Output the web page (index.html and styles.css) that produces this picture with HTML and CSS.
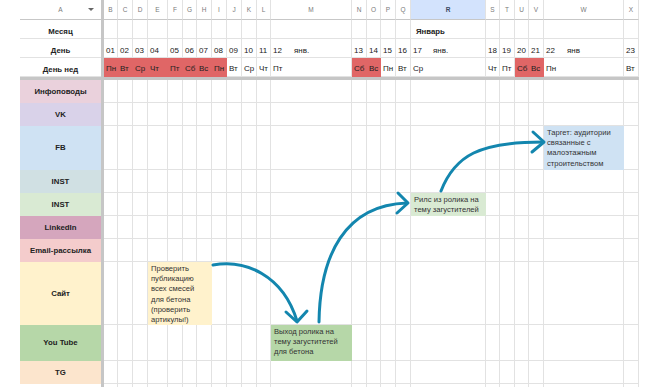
FILE: index.html
```html
<!DOCTYPE html>
<html lang="ru">
<head>
<meta charset="utf-8">
<title>Контент-план</title>
<link rel="stylesheet" href="styles.css">
</head>
<body>
<div class="sheet">
  <!-- grid lines -->
  <div class="hl r1 hdr-line"></div>
  <div class="hl r2"></div>
  <div class="hl r3"></div>
  <div class="hl r4"></div>
  <div class="hl r6"></div>
  <div class="hl r7"></div>
  <div class="hl r8"></div>
  <div class="hl r9"></div>
  <div class="hl r10"></div>
  <div class="hl r11"></div>
  <div class="hl r12"></div>
  <div class="hl r13"></div>
  <div class="hl r14"></div>
  <div class="hl r15"></div>
  <div class="hl r16"></div>

  <div class="vl cB"></div><div class="vl cC"></div><div class="vl cD"></div><div class="vl cE"></div>
  <div class="vl cF"></div><div class="vl cG"></div><div class="vl cH"></div><div class="vl cI"></div>
  <div class="vl cJ"></div><div class="vl cK"></div><div class="vl cL"></div><div class="vl cM"></div>
  <div class="vl cN"></div><div class="vl cO"></div><div class="vl cP"></div><div class="vl cQ"></div>
  <div class="vl cR"></div><div class="vl cS"></div><div class="vl cT"></div><div class="vl cU"></div>
  <div class="vl cV"></div><div class="vl cW"></div><div class="vl cX"></div>

  <!-- column letters -->
  <div class="hd hd-a r1 cA"><span></span><span>A</span><span class="drop"></span></div>
  <div class="hd r1 cB">B</div><div class="hd r1 cC">C</div><div class="hd r1 cD">D</div>
  <div class="hd r1 cE">E</div><div class="hd r1 cF">F</div><div class="hd r1 cG">G</div>
  <div class="hd r1 cH">H</div><div class="hd r1 cI">I</div><div class="hd r1 cJ">J</div>
  <div class="hd r1 cK">K</div><div class="hd r1 cL">L</div><div class="hd r1 cM">M</div>
  <div class="hd r1 cN">N</div><div class="hd r1 cO">O</div><div class="hd r1 cP">P</div>
  <div class="hd r1 cQ">Q</div><div class="hd hd-sel r1 cR">R</div><div class="hd r1 cS">S</div>
  <div class="hd r1 cT">T</div><div class="hd r1 cU">U</div><div class="hd r1 cV">V</div>
  <div class="hd r1 cW">W</div><div class="hd r1 cX">X</div>

  <!-- row labels -->
  <div class="lab top r2 cA">Месяц</div>
  <div class="lab top r3 cA">День</div>
  <div class="lab top r4 cA">День нед</div>
  <div class="lab bg-info r6 cA">Инфоповоды</div>
  <div class="lab bg-vk r7 cA">VK</div>
  <div class="lab bg-fb r8 cA">FB</div>
  <div class="lab bg-inst1 r9 cA">INST</div>
  <div class="lab bg-inst2 r10 cA">INST</div>
  <div class="lab bg-li r11 cA">LinkedIn</div>
  <div class="lab bg-mail r12 cA">Email-рассылка</div>
  <div class="lab bg-site r13 cA">Сайт</div>
  <div class="lab bg-yt r14 cA">You Tube</div>
  <div class="lab bg-tg r15 cA">TG</div>

  <!-- month -->
  <div class="month r2 cR">Январь</div>

  <!-- days -->
  <div class="cell day r3 cB">01</div><div class="cell day r3 cC">02</div>
  <div class="cell day r3 cD">03</div><div class="cell day r3 cE">04</div>
  <div class="cell day r3 cF">05</div><div class="cell day r3 cG">06</div>
  <div class="cell day r3 cH">07</div><div class="cell day r3 cI">08</div>
  <div class="cell day r3 cJ">09</div><div class="cell day r3 cK">10</div>
  <div class="cell day r3 cL">11</div>
  <div class="cell day r3 cM">12<span class="mon">янв.</span></div>
  <div class="cell day r3 cN">13</div><div class="cell day r3 cO">14</div>
  <div class="cell day r3 cP">15</div><div class="cell day r3 cQ">16</div>
  <div class="cell day r3 cR">17<span class="mon mon-r">янв.</span></div>
  <div class="cell day r3 cS">18</div><div class="cell day r3 cT">19</div>
  <div class="cell day r3 cU">20</div><div class="cell day r3 cV">21</div>
  <div class="cell day r3 cW">22<span class="mon mon-w">янв</span></div>
  <div class="cell day r3 cX">23</div>

  <!-- weekdays -->
  <div class="cell wd red r4 cB">Пн</div><div class="cell wd red r4 cC">Вт</div>
  <div class="cell wd red r4 cD">Ср</div><div class="cell wd red r4 cE">Чт</div>
  <div class="cell wd red r4 cF">Пт</div><div class="cell wd red r4 cG">Сб</div>
  <div class="cell wd red r4 cH">Вс</div><div class="cell wd red r4 cI">Пн</div>
  <div class="cell wd r4 cJ">Вт</div><div class="cell wd r4 cK">Ср</div>
  <div class="cell wd r4 cL">Чт</div><div class="cell wd r4 cM">Пт</div>
  <div class="cell wd red r4 cN">Сб</div><div class="cell wd red r4 cO">Вс</div>
  <div class="cell wd r4 cP">Пн</div><div class="cell wd r4 cQ">Вт</div>
  <div class="cell wd r4 cR">Ср</div><div class="cell wd r4 cS">Чт</div>
  <div class="cell wd r4 cT">Пт</div><div class="cell wd red r4 cU">Сб</div>
  <div class="cell wd red r4 cV">Вс</div><div class="cell wd r4 cW">Пн</div>
  <div class="cell wd r4 cX">Вт</div>

  <!-- frozen separators -->
  <div class="frow"></div>
  <div class="fcol"></div>

  <!-- notes -->
  <div class="note bg-site r13 span-site">Проверить<br>публикацию<br>всех смесей<br>для бетона<br>(проверить<br>артикулы!)</div>
  <div class="note bg-yt r14 cM">Выход ролика на<br>тему загуститетей<br>для бетона</div>
  <div class="note bg-inst2 r10 cR">Рилс из ролика на<br>тему загустителей</div>
  <div class="note bg-fb r8 cW">Таргет: аудитории<br>связанные с<br>малоэтажным<br>строительством</div>

  <!-- arrows overlay -->
  <svg class="arrows" viewBox="0 0 656 387" width="656" height="387" aria-hidden="true">
    <g fill="none" stroke="#1386ae" stroke-width="3" stroke-linecap="round" stroke-linejoin="round">
      <path d="M213,265 C245,259 283,275 297,321"/>
      <path d="M286,312 L297,322 L307,311"/>
      <path d="M319,322 C320,255 345,205 407,203"/>
      <path d="M398,193 L408,203 L397,213"/>
      <path d="M441,191 C455,155 480,142 543,142"/>
      <path d="M533,132 L544,142 L532,152"/>
    </g>
  </svg>
</div>
</body>
</html>
```

FILE: styles.css
```css
html, body {
  margin: 0;
  padding: 0;
  background: #ffffff;
}

body {
  font-family: "Liberation Sans", Arial, sans-serif;
  color: #222;
}

.sheet {
  position: relative;
  width: 656px;
  height: 387px;
  overflow: hidden;
  display: grid;
  grid-template-columns:
    20px 81px 3px
    14px 15px 15px 20px 15px 14px 15px 15px
    15px 15px 14px 81px 15px 14px 15px 15px
    75px 14px 15px 14px 15px 80px 15px 1fr;
  grid-template-rows:
    20px 19px 19px 19px 3px
    23px 23px 44px 23px 23px 23px 23px 63px 36px 23px 40px;
}

/* rows */
.r1 { grid-row: 1; }
.r2 { grid-row: 2; }
.r3 { grid-row: 3; }
.r4 { grid-row: 4; }
.r6 { grid-row: 6; }
.r7 { grid-row: 7; }
.r8 { grid-row: 8; }
.r9 { grid-row: 9; }
.r10 { grid-row: 10; }
.r11 { grid-row: 11; }
.r12 { grid-row: 12; }
.r13 { grid-row: 13; }
.r14 { grid-row: 14; }
.r15 { grid-row: 15; }
.r16 { grid-row: 16; }

/* columns */
.cA { grid-column: 2; }
.cB { grid-column: 4; }
.cC { grid-column: 5; }
.cD { grid-column: 6; }
.cE { grid-column: 7; }
.cF { grid-column: 8; }
.cG { grid-column: 9; }
.cH { grid-column: 10; }
.cI { grid-column: 11; }
.cJ { grid-column: 12; }
.cK { grid-column: 13; }
.cL { grid-column: 14; }
.cM { grid-column: 15; }
.cN { grid-column: 16; }
.cO { grid-column: 17; }
.cP { grid-column: 18; }
.cQ { grid-column: 19; }
.cR { grid-column: 20; }
.cS { grid-column: 21; }
.cT { grid-column: 22; }
.cU { grid-column: 23; }
.cV { grid-column: 24; }
.cW { grid-column: 25; }
.cX { grid-column: 26; }
.span-site { grid-column: 7 / 11; }

/* grid lines */
.hl {
  grid-column: 2 / 27;
  border-bottom: 1px solid #e2e2e2;
}
.hl.hdr-line { border-bottom-color: #c7c7c7; }
.vl {
  grid-row: 1 / -1;
  border-right: 1px solid #e2e2e2;
}

.frow {
  grid-row: 5;
  grid-column: 2 / 27;
  background: #c6c6c6;
}
.fcol {
  grid-row: 1 / -1;
  grid-column: 3;
  background: #c6c6c6;
}

/* column letter header */
.hd {
  display: flex;
  align-items: center;
  justify-content: center;
  font-size: 6.5px;
  color: #7a7a7a;
  border-right: 1px solid #e2e2e2;
  border-bottom: 1px solid #c7c7c7;
}
.hd-sel {
  background: #d3e3fd;
  color: #3c4a63;
  font-weight: bold;
}
.hd-a {
  display: grid;
  grid-template-columns: 1fr auto 1fr;
  align-items: center;
  border-right: none;
}
.hd-a .drop {
  justify-self: end;
  margin-right: 7px;
  width: 0;
  height: 0;
  border-left: 3px solid transparent;
  border-right: 3px solid transparent;
  border-top: 3.5px solid #666;
}

/* row labels */
.lab {
  display: flex;
  align-items: center;
  justify-content: center;
  font-size: 7.8px;
  font-weight: bold;
  color: #222;
  line-height: 10px;
}
.lab.top {
  align-items: flex-end;
  padding-bottom: 2px;
}

.month {
  display: flex;
  align-items: flex-end;
  padding-left: 5px;
  padding-bottom: 2px;
  font-size: 7.8px;
  font-weight: bold;
  line-height: 10px;
}

.cell {
  display: flex;
  align-items: flex-end;
  padding: 0 0 3px 2px;
  font-size: 8px;
  line-height: 10px;
  color: #222;
  white-space: nowrap;
}
.day { padding-bottom: 2px; }
.red { background: #e06666; }

.mon { margin-left: 12px; }
.mon-r { margin-left: 11px; }
.mon-w { margin-left: 12px; }

/* notes */
.note {
  padding: 2px 2px 0 3px;
  font-size: 7.6px;
  line-height: 10.2px;
  color: #333;
  white-space: nowrap;
}

/* fills */
.bg-info { background: #ead1dc; }
.bg-vk { background: #d9d2e9; }
.bg-fb { background: #cfe2f3; }
.bg-inst1 { background: #d0e0e3; }
.bg-inst2 { background: #d9ead3; }
.bg-li { background: #d5a6bd; }
.bg-mail { background: #f4cccc; }
.bg-site { background: #fff2cc; }
.bg-yt { background: #b6d7a8; }
.bg-tg { background: #fce5cd; }

.arrows {
  position: absolute;
  left: 0;
  top: 0;
  pointer-events: none;
}
```
